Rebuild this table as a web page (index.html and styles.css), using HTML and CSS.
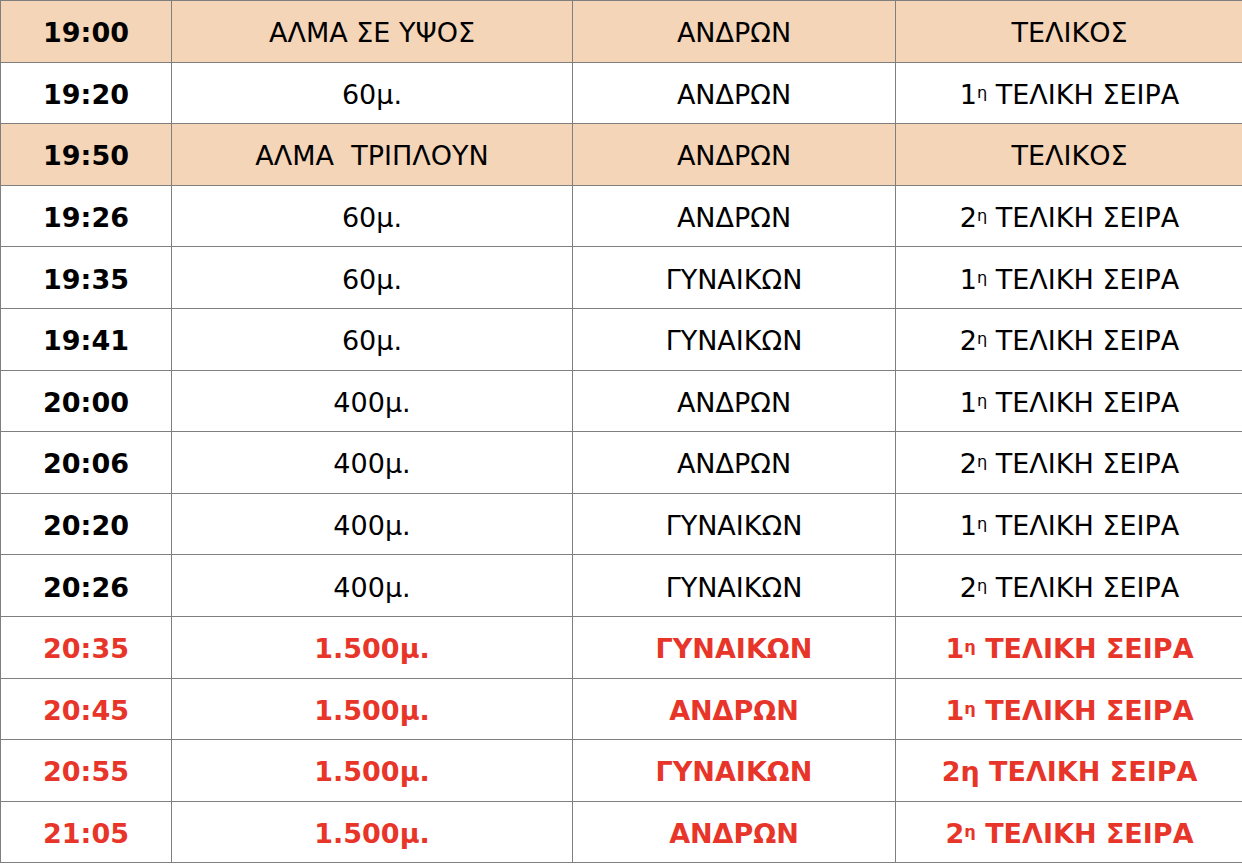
FILE: index.html
```html
<!DOCTYPE html>
<html lang="el">
<head>
<meta charset="utf-8">
<link rel="stylesheet" href="styles.css">
</head>
<body>
<table class="schedule">
  <colgroup>
    <col class="c-time"><col class="c-event"><col class="c-cat"><col class="c-phase">
  </colgroup>
  <tbody>
    <tr class="hl"><td class="time">19:00</td><td>ΑΛΜΑ ΣΕ ΥΨΟΣ</td><td>ΑΝΔΡΩΝ</td><td>ΤΕΛΙΚΟΣ</td></tr>
    <tr><td class="time">19:20</td><td>60μ.</td><td>ΑΝΔΡΩΝ</td><td>1<sup>η</sup> ΤΕΛΙΚΗ ΣΕΙΡΑ</td></tr>
    <tr class="hl"><td class="time">19:50</td><td>ΑΛΜΑ&nbsp; ΤΡΙΠΛΟΥΝ</td><td>ΑΝΔΡΩΝ</td><td>ΤΕΛΙΚΟΣ</td></tr>
    <tr><td class="time">19:26</td><td>60μ.</td><td>ΑΝΔΡΩΝ</td><td>2<sup>η</sup> ΤΕΛΙΚΗ ΣΕΙΡΑ</td></tr>
    <tr><td class="time">19:35</td><td>60μ.</td><td>ΓΥΝΑΙΚΩΝ</td><td>1<sup>η</sup> ΤΕΛΙΚΗ ΣΕΙΡΑ</td></tr>
    <tr><td class="time">19:41</td><td>60μ.</td><td>ΓΥΝΑΙΚΩΝ</td><td>2<sup>η</sup> ΤΕΛΙΚΗ ΣΕΙΡΑ</td></tr>
    <tr><td class="time">20:00</td><td>400μ.</td><td>ΑΝΔΡΩΝ</td><td>1<sup>η</sup> ΤΕΛΙΚΗ ΣΕΙΡΑ</td></tr>
    <tr><td class="time">20:06</td><td>400μ.</td><td>ΑΝΔΡΩΝ</td><td>2<sup>η</sup> ΤΕΛΙΚΗ ΣΕΙΡΑ</td></tr>
    <tr><td class="time">20:20</td><td>400μ.</td><td>ΓΥΝΑΙΚΩΝ</td><td>1<sup>η</sup> ΤΕΛΙΚΗ ΣΕΙΡΑ</td></tr>
    <tr><td class="time">20:26</td><td>400μ.</td><td>ΓΥΝΑΙΚΩΝ</td><td>2<sup>η</sup> ΤΕΛΙΚΗ ΣΕΙΡΑ</td></tr>
    <tr class="red"><td class="time">20:35</td><td>1.500μ.</td><td>ΓΥΝΑΙΚΩΝ</td><td>1<sup>η</sup> ΤΕΛΙΚΗ ΣΕΙΡΑ</td></tr>
    <tr class="red"><td class="time">20:45</td><td>1.500μ.</td><td>ΑΝΔΡΩΝ</td><td>1<sup>η</sup> ΤΕΛΙΚΗ ΣΕΙΡΑ</td></tr>
    <tr class="red"><td class="time">20:55</td><td>1.500μ.</td><td>ΓΥΝΑΙΚΩΝ</td><td>2η ΤΕΛΙΚΗ ΣΕΙΡΑ</td></tr>
    <tr class="red"><td class="time">21:05</td><td>1.500μ.</td><td>ΑΝΔΡΩΝ</td><td>2<sup>η</sup> ΤΕΛΙΚΗ ΣΕΙΡΑ</td></tr>
  </tbody>
</table>
</body>
</html>
```
FILE: styles.css
```css
html, body {
  margin: 0;
  padding: 0;
  background: #ffffff;
}

.schedule {
  border-collapse: collapse;
  table-layout: fixed;
  width: 1243px;
  font-family: "DejaVu Sans", sans-serif;
  font-size: 27px;
  color: #000000;
}

.c-time { width: 171px; }
.c-event { width: 401px; }
.c-cat { width: 323px; }
.c-phase { width: 348px; }

.schedule td {
  border: 1px solid #7f7f7f;
  height: 61.6px;
  padding: 3px 0 0;
  box-sizing: border-box;
  text-align: center;
  vertical-align: middle;
  white-space: nowrap;
  line-height: 1;
}

.schedule td.time {
  font-weight: bold;
}

.schedule tr.hl td {
  background: #f5d5b8;
}

.schedule tr.red td {
  color: #e8352a;
  font-weight: bold;
}

.schedule sup {
  font-size: 60%;
  vertical-align: 0.4em;
  line-height: 0;
}
```
